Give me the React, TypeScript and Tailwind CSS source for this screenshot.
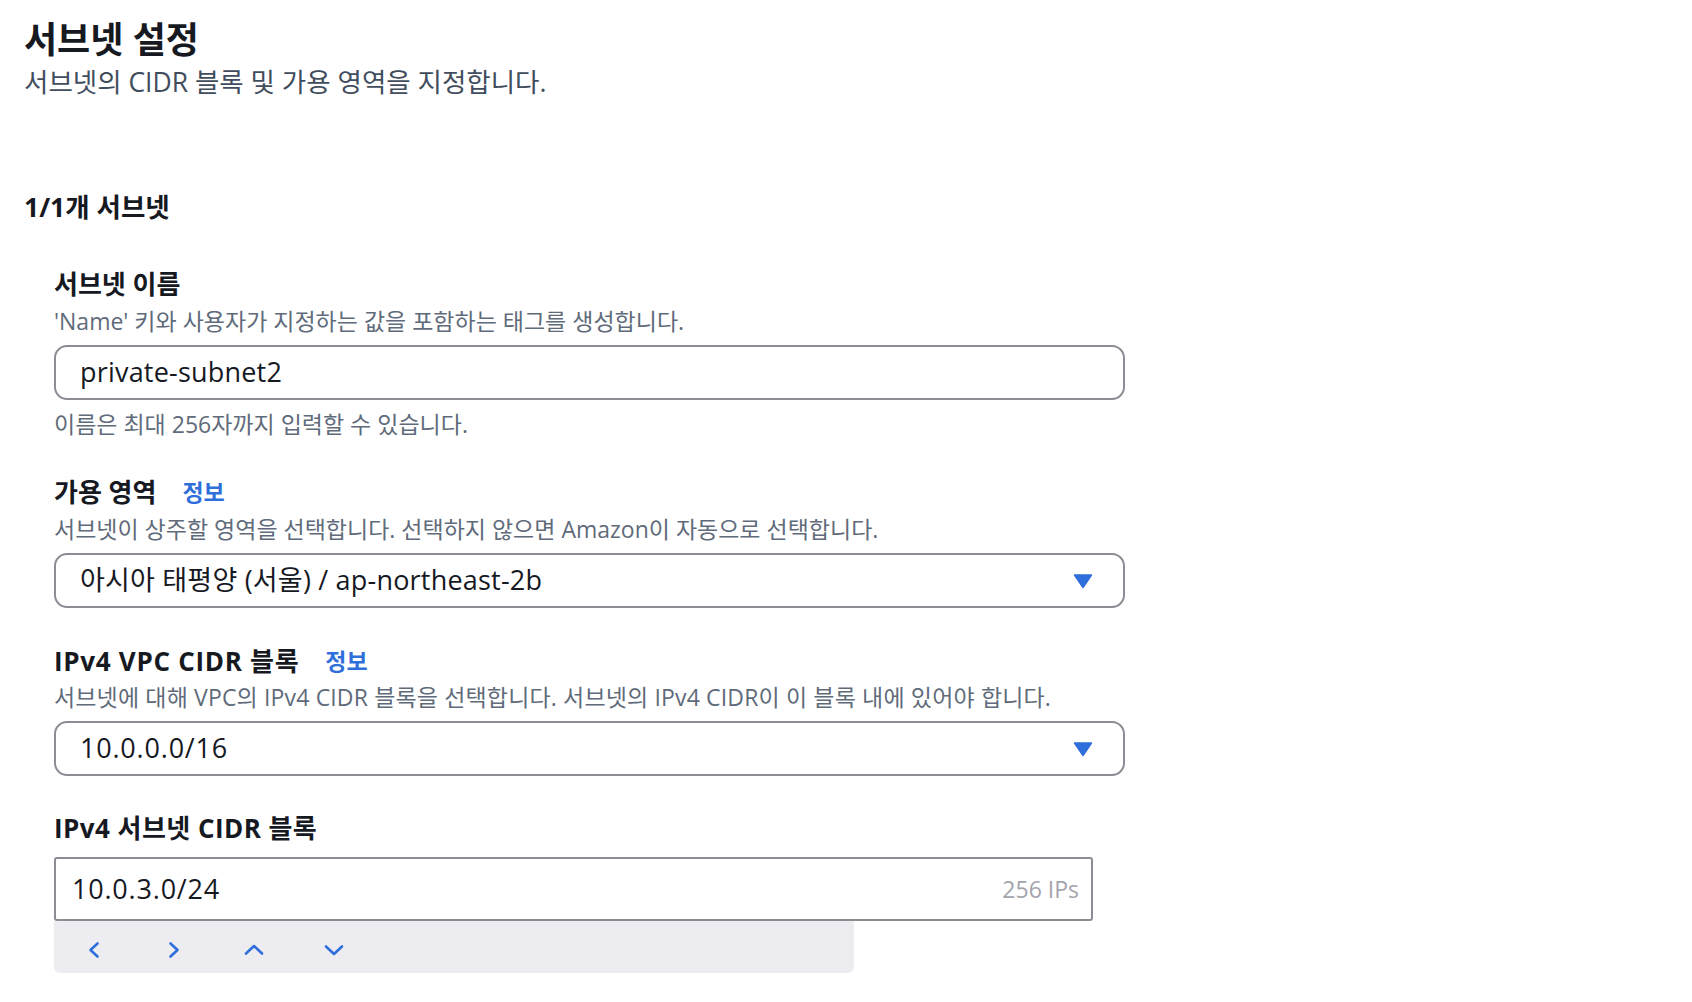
const font = { fontFamily: '"Open Sans", "Noto Sans CJK KR", sans-serif' };

function Caret() {
  return (
    <svg width="20" height="16" viewBox="0 0 20 16" className="shrink-0">
      <path d="M1.5 2 L18.5 2 L10 14.5 Z" fill="#2f6fdb" stroke="#2f6fdb" strokeWidth="1.5" strokeLinejoin="round" />
    </svg>
  );
}

function Chevron({ d }: { d: string }) {
  return (
    <svg width="20" height="20" viewBox="0 0 20 20" fill="none" className="shrink-0">
      <path d={d} stroke="#2f6fdb" strokeWidth="2.6" strokeLinecap="round" strokeLinejoin="round" />
    </svg>
  );
}

function Label({ children, info, className = "" }: { children: React.ReactNode; info?: boolean; className?: string }) {
  return (
    <div className={`flex items-center gap-[26px] text-[26px] leading-[32px] font-bold text-[#16191f] ${className}`}>
      <span>{children}</span>
      {info && <span className="text-[23px] font-bold tracking-normal text-[#2f6fdb]">정보</span>}
    </div>
  );
}

function Desc({ children, className = "" }: { children: React.ReactNode; className?: string }) {
  return <p className={`text-[23px] leading-[28px] text-[#5f6b7a] ${className}`}>{children}</p>;
}

function Select({ value, className = "" }: { value: string; className?: string }) {
  return (
    <div
      className={`flex h-[55px] w-[1071px] items-center justify-between rounded-[13px] border-2 border-[#8c8c94] bg-white pl-[24px] pr-[30px] text-[27px] text-[#16191f] ${className}`}
    >
      <span>{value}</span>
      <Caret />
    </div>
  );
}

export default function App() {
  return (
    <main className="min-h-screen bg-white" style={font}>
      <div className="flex flex-col pl-[24px] pt-[18px]">
        <h1 className="text-[36px] leading-[44px] font-bold text-[#16191f]">서브넷 설정</h1>
        <p className="mt-[5px] text-[26.5px] leading-[30px] text-[#414d5c]">
          서브넷의 CIDR 블록 및 가용 영역을 지정합니다.
        </p>

        <h2 className="mt-[93px] text-[26.5px] leading-[34px] font-bold text-[#16191f]">1/1개 서브넷</h2>

        <div className="flex flex-col pl-[30px]">
          <div className="mt-[44px]">
            <Label>서브넷 이름</Label>
          </div>
          <Desc className="mt-[7px]">'Name' 키와 사용자가 지정하는 값을 포함하는 태그를 생성합니다.</Desc>
          <div className="mt-[10px] flex h-[55px] w-[1071px] items-center rounded-[13px] border-2 border-[#8c8c94] bg-white pl-[24px] text-[27px] tracking-[0.2px] text-[#16191f]">
            private-subnet2
          </div>
          <Desc className="mt-[10px]">이름은 최대 256자까지 입력할 수 있습니다.</Desc>

          <div className="mt-[38px]">
            <Label info>가용 영역</Label>
          </div>
          <Desc className="mt-[7px]">서브넷이 상주할 영역을 선택합니다. 선택하지 않으면 Amazon이 자동으로 선택합니다.</Desc>
          <Select className="mt-[10px] tracking-[0.2px]" value="아시아 태평양 (서울) / ap-northeast-2b" />

          <div className="mt-[37px]">
            <Label info className="tracking-[0.7px]">IPv4 VPC CIDR 블록</Label>
          </div>
          <Desc className="mt-[6px] tracking-[0.15px]">
            서브넷에 대해 VPC의 IPv4 CIDR 블록을 선택합니다. 서브넷의 IPv4 CIDR이 이 블록 내에 있어야 합니다.
          </Desc>
          <Select className="mt-[10px] tracking-[0.8px]" value="10.0.0.0/16" />

          <div className="mt-[36px]">
            <Label className="tracking-[0.45px]">IPv4 서브넷 CIDR 블록</Label>
          </div>
          <div className="mt-[13px] flex h-[64px] w-[1039px] items-center justify-between rounded-[3px] border-2 border-[#8c8c94] bg-white pl-[16px] pr-[12px]">
            <span className="text-[27px] tracking-[0.8px] text-[#16191f]">10.0.3.0/24</span>
            <span className="text-[23px] text-[#a4a4ad]">256 IPs</span>
          </div>
          <div className="flex h-[52px] w-[800px] items-center gap-[60px] rounded-b-[6px] bg-[#ececf1] pl-[30px] pt-[6px]">
            <Chevron d="M13.5 3.5 L6.5 10 L13.5 16.5" />
            <Chevron d="M6.5 3.5 L13.5 10 L6.5 16.5" />
            <Chevron d="M2 13.5 L10 6 L18 13.5" />
            <Chevron d="M2 6.5 L10 14 L18 6.5" />
          </div>
        </div>
      </div>
    </main>
  );
}
